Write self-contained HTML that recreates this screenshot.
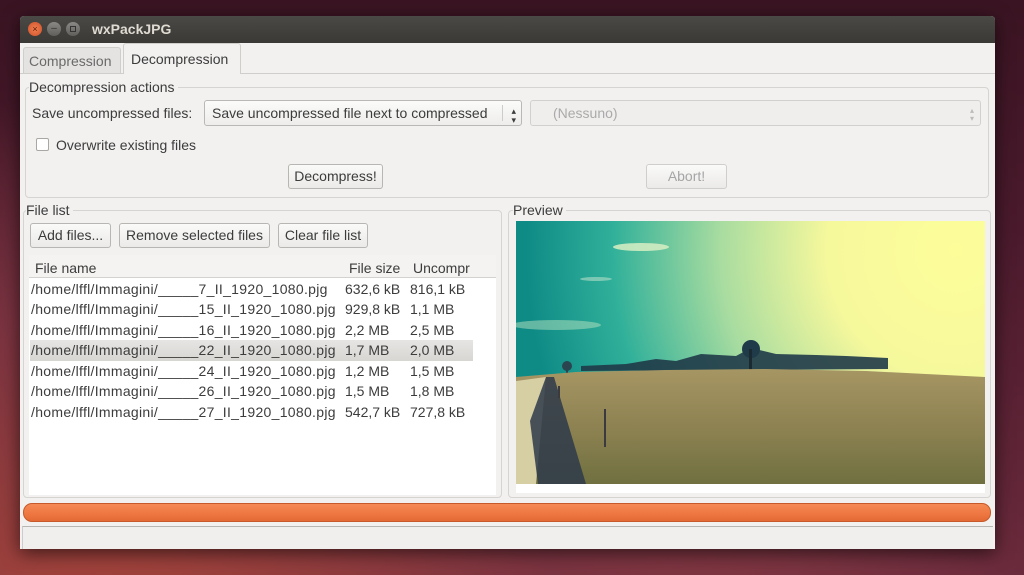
<!DOCTYPE html>
<html><head><meta charset="utf-8">
<style>
*{box-sizing:border-box;margin:0;padding:0}
body{width:1024px;height:575px;overflow:hidden;position:relative;font-family:"Liberation Sans",sans-serif;font-size:14px;color:#3c3c3c;
background:radial-gradient(ellipse at 10% 110%,#a8453a 0%,#7a3340 35%,transparent 60%),radial-gradient(ellipse at 60% 120%,#8a3d45 0%,transparent 50%),linear-gradient(180deg,#3a1422 0%,#4a1a2c 40%,#6a2a3c 100%);}
.a{position:absolute;white-space:nowrap}
.win{position:absolute;left:20px;top:16px;width:975px;height:533px;background:#f2f1f0;box-shadow:0 4px 18px rgba(0,0,0,.6);border-radius:4px 4px 0 0;overflow:hidden}
.title{position:absolute;left:0;top:0;width:975px;height:27px;background:linear-gradient(#4a4945,#3a3935);}
.btn{position:absolute;border:1px solid #b8b6b2;border-radius:3px;background:linear-gradient(#fafaf9,#ebeae8);text-align:center;line-height:22px;height:25px}
.grp{position:absolute;border:1px solid #d6d4d0;border-radius:4px}
.combo{position:absolute;border:1px solid #bab8b4;border-radius:3px;background:linear-gradient(#fbfbfa,#eeedeb);height:26px;line-height:24px;padding-left:7px}
.row{position:absolute;left:10px;height:21px;line-height:21px;width:442px}
.row span{position:absolute}
.row span:first-child{letter-spacing:.3px}
</style></head><body>
<div class="win">
 <div class="title">
  <div class="a" style="left:8px;top:6px;width:14px;height:14px;border-radius:50%;background:radial-gradient(#f08050,#d0502a);color:#5a1a08;font-size:9px;line-height:14px;text-align:center">×</div>
  <div class="a" style="left:27px;top:6px;width:14px;height:14px;border-radius:50%;background:linear-gradient(#8a8985,#5f5e5a);color:#333;font-size:10px;line-height:13px;text-align:center">–</div>
  <div class="a" style="left:46px;top:6px;width:14px;height:14px;border-radius:50%;background:linear-gradient(#8a8985,#5f5e5a)"><div style="margin:4px;width:6px;height:6px;border:1px solid #333"></div></div>
  <div class="a" style="left:72px;top:5px;color:#dfdbd2;font-weight:bold;font-size:14px">wxPackJPG</div>
 </div>
 <div class="a" style="left:3px;top:31px;width:98px;height:27px;border:1px solid #d0cecb;border-bottom:none;background:#e4e3e1;border-radius:3px 3px 0 0"></div>
 <div class="a" style="left:9px;top:37px;color:#6a6a6a">Compression</div>
 <div class="a" style="left:103px;top:27px;width:118px;height:31px;border:1px solid #d0cecb;border-bottom:none;background:#f2f1f0;border-radius:3px 3px 0 0"></div>
 <div class="a" style="left:111px;top:35px">Decompression</div>
 <div class="a" style="left:0;top:57px;width:103px;height:1px;background:#d0cecb"></div>
 <div class="a" style="left:221px;top:57px;width:754px;height:1px;background:#d0cecb"></div>
 <div class="grp" style="left:5px;top:71px;width:964px;height:111px"></div>
 <div class="a" style="left:9px;top:63px;background:#f2f1f0;padding-right:3px">Decompression actions</div>
 <div class="a" style="left:12px;top:89px">Save uncompressed files:</div>
 <div class="combo" style="left:184px;top:84px;width:318px">Save uncompressed file next to compressed<span style="position:absolute;right:18px;top:4px;width:1px;height:16px;background:#ccc"></span><span style="position:absolute;right:5px;top:6px;font-size:9px;line-height:9px">▴<br>▾</span></div>
 <div class="combo" style="left:510px;top:84px;width:451px;color:#aaa;background:#efeeec;border-color:#d2d0cc;padding-left:22px">(Nessuno)<span style="position:absolute;right:6px;top:6px;font-size:8px;line-height:8px;color:#bbb">▴<br>▾</span></div>
 <div class="a" style="left:16px;top:122px;width:13px;height:13px;border:1px solid #a9a7a3;border-radius:2px;background:#fff"></div>
 <div class="a" style="left:36px;top:121px">Overwrite existing files</div>
 <div class="btn" style="left:268px;top:148px;width:95px">Decompress!</div>
 <div class="btn" style="left:626px;top:148px;width:81px;color:#a5a5a5;border-color:#d0cecb">Abort!</div>
 <div class="grp" style="left:3px;top:194px;width:479px;height:288px"></div>
 <div class="a" style="left:6px;top:186px;background:#f2f1f0;padding-right:3px">File list</div>
 <div class="btn" style="left:10px;top:207px;width:81px">Add files...</div>
 <div class="btn" style="left:99px;top:207px;width:151px">Remove selected files</div>
 <div class="btn" style="left:258px;top:207px;width:90px">Clear file list</div>
 <div class="a" style="left:9px;top:239px;width:467px;height:240px;background:#fff"></div>
 <div class="a" style="left:9px;top:239px;width:467px;height:23px;background:#f4f3f2;border-bottom:1px solid #d4d2ce"></div>
 <div class="a" style="left:15px;top:244px">File name</div>
 <div class="a" style="left:329px;top:244px">File size</div>
 <div class="a" style="left:393px;top:244px">Uncompr</div>
 <div class="a" style="left:10px;top:324px;width:443px;height:21px;background:linear-gradient(#e6e5e3,#d8d6d3)"></div>
 <div class="row" style="top:263px"><span style="left:1px">/home/lffl/Immagini/_____7_II_1920_1080.pjg</span><span style="left:315px">632,6 kB</span><span style="left:380px">816,1 kB</span></div>
 <div class="row" style="top:283px"><span style="left:1px">/home/lffl/Immagini/_____15_II_1920_1080.pjg</span><span style="left:315px">929,8 kB</span><span style="left:380px">1,1 MB</span></div>
 <div class="row" style="top:304px"><span style="left:1px">/home/lffl/Immagini/_____16_II_1920_1080.pjg</span><span style="left:315px">2,2 MB</span><span style="left:380px">2,5 MB</span></div>
 <div class="row" style="top:324px"><span style="left:1px">/home/lffl/Immagini/_____22_II_1920_1080.pjg</span><span style="left:315px">1,7 MB</span><span style="left:380px">2,0 MB</span></div>
 <div class="row" style="top:345px"><span style="left:1px">/home/lffl/Immagini/_____24_II_1920_1080.pjg</span><span style="left:315px">1,2 MB</span><span style="left:380px">1,5 MB</span></div>
 <div class="row" style="top:365px"><span style="left:1px">/home/lffl/Immagini/_____26_II_1920_1080.pjg</span><span style="left:315px">1,5 MB</span><span style="left:380px">1,8 MB</span></div>
 <div class="row" style="top:386px"><span style="left:1px">/home/lffl/Immagini/_____27_II_1920_1080.pjg</span><span style="left:315px">542,7 kB</span><span style="left:380px">727,8 kB</span></div>
 <div class="grp" style="left:488px;top:194px;width:483px;height:288px"></div>
 <div class="a" style="left:493px;top:186px;background:#f2f1f0;padding-right:3px">Preview</div>
 <div class="a" style="left:496px;top:205px;width:469px;height:272px;background:#fff"></div>
 <div class="a" style="left:496px;top:205px;width:469px;height:263px;overflow:hidden">
  <svg width="469" height="263" viewBox="0 0 469 263">
   <defs>
    <radialGradient id="sun" cx="440" cy="30" r="430" gradientUnits="userSpaceOnUse">
     <stop offset="0" stop-color="#fdfd9a"/><stop offset=".3" stop-color="#f6f89c"/><stop offset=".55" stop-color="#a8dca0"/><stop offset=".8" stop-color="#30b09a"/><stop offset="1" stop-color="#0f8b86"/>
    </radialGradient>
    <linearGradient id="fld" x1="0" y1="0" x2="0" y2="1">
     <stop offset="0" stop-color="#a69664"/><stop offset=".5" stop-color="#8e8252"/><stop offset="1" stop-color="#707040"/>
    </linearGradient>
   </defs>
   <rect width="469" height="263" fill="url(#sun)"/>
   <ellipse cx="125" cy="26" rx="28" ry="4" fill="#d8efc4" opacity=".85"/>
   <ellipse cx="40" cy="104" rx="45" ry="5" fill="#b8e4c0" opacity=".5"/>
   <ellipse cx="80" cy="58" rx="16" ry="2" fill="#9fd6c0" opacity=".7"/>
   <path d="M65 150 L65 145 L110 143 L140 138 L160 140 L185 133 L220 135 L235 127 L260 133 L300 134 L330 135 L372 137 L372 148 Z" fill="#1f3a48" opacity=".9"/>
   <circle cx="235" cy="128" r="9" fill="#1f3a48"/><rect x="233" y="128" width="3" height="26" fill="#1a2a30"/>
   <circle cx="51" cy="145" r="5" fill="#2a4550"/><rect x="50" y="145" width="2" height="8" fill="#2a4550"/>
   <path d="M0 156 L60 151 L150 149 L250 148 L350 150 L469 156 L469 263 L0 263Z" fill="url(#fld)"/>
   <path d="M0 160 L30 156 L20 263 L0 263Z" fill="#d6cfa4"/>
   <path d="M30 156 L38 156 L70 263 L22 263 L14 200Z" fill="#2e3a4a" opacity=".85"/>
   <rect x="88" y="188" width="2" height="38" fill="#3a3a40"/>
   <rect x="42" y="165" width="2" height="12" fill="#3a3a40"/>
  </svg>
 </div>
 <div class="a" style="left:3px;top:487px;width:968px;height:19px;border:1px solid #c65a2a;border-radius:9px;background:linear-gradient(#f58a55,#ee7640 60%,#e46a35)"></div>
 <div class="a" style="left:2px;top:510px;width:971px;height:23px;border-top:1px solid #b8b6b2;border-left:1px solid #ccc;background:#f0efee"></div>
</div>
</body></html>
